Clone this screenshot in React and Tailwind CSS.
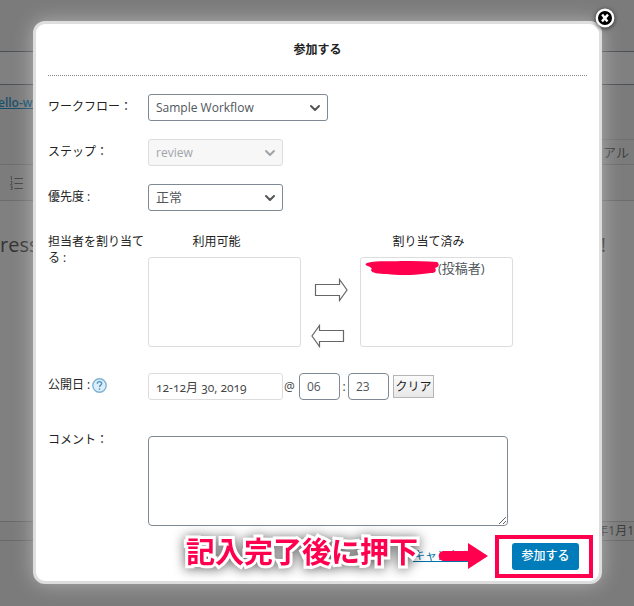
import React from 'react';
import { ChevronDown } from 'lucide-react';

function Label({ htmlFor, children }) {
  return (
    <label htmlFor={htmlFor} className="w-25 shrink-0 pr-1 pt-[5px] text-xs leading-4 text-[#222]">
      {children}
    </label>
  );
}

function Select({ id, className, disabled, children }) {
  return (
    <div className={`relative ${className}`}>
      <select
        id={id}
        disabled={disabled}
        className="block h-[27px] w-full appearance-none rounded-[3px] border border-[#7e8993] bg-white pl-[7px] pr-6 text-[#50565c] disabled:border-[#ddd] disabled:bg-[#f7f7f7] disabled:text-[#a0a5aa] disabled:opacity-100"
      >
        {children}
      </select>
      <ChevronDown
        className={`pointer-events-none absolute right-[5px] top-[6px] h-4 w-4 ${disabled ? 'text-[#a0a5aa]' : 'text-[#555]'}`}
        strokeWidth={3}
      />
    </div>
  );
}

function ArrowButton({ label, flip }) {
  return (
    <button type="button" aria-label={label} className="block">
      <svg width="34" height="24" viewBox="0 0 34 24" className={flip ? 'rotate-180' : ''}>
        <path d="M1.5 6.5H25.5V1.5L33 12L25.5 22.5V17.5H1.5Z" fill="#fff" stroke="#666" strokeWidth="1.2" />
      </svg>
    </button>
  );
}

function EditorBackdrop() {
  return (
    <div className="flex min-h-screen flex-col bg-[#7b7b7b] text-[#3c3c3c]">
      <div className="mt-[51px] h-[34px] border-y border-[#4b5055] bg-[#808080]" />
      <div className="flex h-[79px] justify-between">
        <a href="#permalink" className="-ml-[2px] mt-2 text-xs font-semibold leading-5 text-[#174f6b] underline">
          ello-world
        </a>
        <div className="mt-[54px] w-20 border-t border-[#717171] pr-[5px] pt-[3px] text-right text-[13px] text-[#3f3f3f]">
          ュアル
        </div>
      </div>
      <div className="flex h-[37px] items-center border-y border-[#6c6c6c] bg-[#7c7c7c] pl-[10px]">
        <svg width="13" height="14" viewBox="0 0 13 14" fill="none" stroke="#444">
          <path d="M4.5 2.5H13M4.5 7.5H13M4.5 12.5H13" />
          <path d="M0.5 1L1.5 0.5V4M0.5 5.5H2V7L0.5 8.5H2.5M0.5 10H2V11.5H1M2 11.5V13.5H0.5" strokeWidth="0.8" />
        </svg>
      </div>
      <div className="flex h-80 justify-between bg-[#808080] pt-[30px] text-xl text-[#333]">
        <span>ress</span>
        <span className="pr-7">!</span>
      </div>
      <div className="flex h-5 items-center justify-end border-y border-[#696969] text-xs">2020年1月1</div>
    </div>
  );
}

export default function App() {
  return (
    <div className="relative min-h-screen overflow-hidden font-['Open_Sans','Noto_Sans_CJK_JP',sans-serif]">
      <EditorBackdrop />

      <div className="absolute inset-0 pl-[33px] pr-8 pt-[21px]">
        <div
          role="dialog"
          aria-labelledby="dialog-title"
          className="relative rounded-xl border-3 border-[#dedede] bg-white px-3 pb-[3px] shadow-[0_0_20px_rgba(255,255,255,0.4)]"
        >
          <button type="button" aria-label="閉じる" className="absolute -right-[18px] -top-[18px] block">
            <svg width="24" height="24" viewBox="0 0 24 24" className="drop-shadow-[0_1px_2px_rgba(0,0,0,0.7)]">
              <circle cx="12" cy="12" r="8.2" fill="#000" stroke="#fff" strokeWidth="2.4" />
              <path d="M9.2 8.6L14.4 15.4M15 8.6L9 15.4" stroke="#fff" strokeWidth="2.4" />
            </svg>
          </button>

          <form>
            <h2
              id="dialog-title"
              className="flex h-[52px] items-center justify-center border-b border-dotted border-[#888] text-xs font-bold text-[#222]"
            >
              参加する
            </h2>

            <div className="flex flex-col gap-[18px] pt-[18px]">
              <div className="flex">
                <Label htmlFor="workflow">ワークフロー：</Label>
                <Select id="workflow" className="w-45 text-xs">
                  <option>Sample Workflow</option>
                </Select>
              </div>
              <div className="flex">
                <Label htmlFor="step">ステップ：</Label>
                <Select id="step" className="w-[135px] text-xs" disabled>
                  <option>review</option>
                </Select>
              </div>
              <div className="flex">
                <Label htmlFor="priority">優先度 :</Label>
                <Select id="priority" className="w-[135px] text-[13px]">
                  <option>正常</option>
                </Select>
              </div>
            </div>

            <div className="mt-[18px] flex">
              <Label htmlFor="available">担当者を割り当てる :</Label>
              <div className="flex w-[153px] flex-col pt-[5px]">
                <label htmlFor="available" className="mb-[7px] pr-4 text-center text-xs leading-4 text-[#222]">
                  利用可能
                </label>
                <select
                  id="available"
                  multiple
                  className="block h-[90px] w-full rounded-[3px] border border-[#ddd] bg-white"
                />
              </div>
              <div className="flex w-[59px] flex-col gap-[22px] pl-[13px] pt-[49px]">
                <ArrowButton label="割り当てる" />
                <div className="-ml-[3px]">
                  <ArrowButton label="割り当てを解除" flip />
                </div>
              </div>
              <div className="relative flex w-[153px] flex-col pt-[5px]">
                <label htmlFor="assigned" className="mb-[7px] pr-4 text-center text-xs leading-4 text-[#222]">
                  割り当て済み
                </label>
                <select
                  id="assigned"
                  multiple
                  className="block h-[90px] w-full overflow-hidden rounded-[3px] border border-[#ddd] bg-white text-[13px] text-[#50565c]"
                >
                  <option className="min-h-0 p-0 pl-[77px] leading-4">(投稿者)</option>
                </select>
                <svg className="absolute left-[5px] top-[31px]" width="75" height="16" viewBox="0 0 75 16">
                  <path
                    d="M2 3C14 0 24 2 36 1C50 1 62 1 72 2C75 4 74 7 70 8C72 11 70 13 66 13C52 15 36 16 22 14C14 14 6 13 6 10C8 8 5 7 3 6C0 5 0 4 2 3Z"
                    fill="#ff004f"
                  />
                </svg>
              </div>
            </div>

            <div className="mt-[25px] flex">
              <div className="flex w-25 shrink-0 items-start">
                <label htmlFor="publish-date" className="pt-1 text-xs leading-4 text-[#222]">
                  公開日 :
                </label>
                <svg className="ml-[2px] mt-[5px]" width="15" height="15" viewBox="0 0 15 15">
                  <circle cx="7.5" cy="7.5" r="6.7" fill="#dceefa" stroke="#7fb3d3" strokeWidth="1.4" />
                  <path
                    d="M5.3 5.8C5.3 3 9.7 3 9.7 5.6C9.7 7.2 7.5 7 7.5 9M7.5 10.2V11.7"
                    fill="none"
                    stroke="#4d93bd"
                    strokeWidth="1.4"
                  />
                </svg>
              </div>
              <input
                id="publish-date"
                type="text"
                defaultValue="12-12月 30, 2019"
                className="h-[27px] w-[135px] rounded-[3px] border border-[#ddd] bg-white px-[7px] text-xs oldstyle-nums text-[#444]"
              />
              <span className="w-4 pl-px pt-1 text-xs leading-5 text-[#444]">@</span>
              <input
                type="text"
                aria-label="時"
                defaultValue="06"
                className="h-[27px] w-[41px] rounded border border-[#7e8993] bg-white px-[7px] text-xs text-[#50565c]"
              />
              <span className="w-2 pt-1 text-center text-xs leading-5 text-[#444]">:</span>
              <input
                type="text"
                aria-label="分"
                defaultValue="23"
                className="h-[27px] w-[41px] rounded border border-[#7e8993] bg-white px-[7px] text-xs text-[#50565c]"
              />
              <button
                type="button"
                className="ml-1 mt-[2px] h-[23px] w-[41px] border border-[#b5b5b5] bg-linear-to-b from-[#fafafa] to-[#e8e8e8] text-xs text-[#222]"
              >
                クリア
              </button>
            </div>

            <div className="mt-[27px] flex">
              <Label htmlFor="comment">コメント：</Label>
              <textarea
                id="comment"
                className="mt-[9px] block h-[90px] w-90 rounded border border-[#7e8993] bg-white p-2 text-[13px]"
              />
            </div>

            <div className="relative mt-2 flex h-11 items-center justify-end">
              <a href="#cancel" className="mr-[22px] text-xs text-[#0073aa] underline">
                キャンセル
              </a>
              <div className="-mr-[6px] border-4 border-[#ff004f] py-1 pl-[13px] pr-[10px]">
                <button
                  type="submit"
                  className="block h-[27px] w-[67px] rounded-[3px] bg-[#007cba] text-xs font-medium text-white"
                >
                  参加する
                </button>
              </div>
              <svg className="absolute right-[99px] top-[9px]" width="50" height="26" viewBox="0 0 50 26">
                <path d="M6 8H30V0L50 13L30 26V18H6C-1 18-1 8 6 8Z" fill="#ff004f" />
              </svg>
              <p className="absolute right-[169px] top-0 whitespace-nowrap text-[29px] font-bold leading-9 text-[#ff004f] [paint-order:stroke_fill] [-webkit-text-stroke:6px_white] drop-shadow-[0_1px_6px_rgba(0,0,0,0.6)]">
                記入完了後に押下
              </p>
            </div>
          </form>
        </div>
      </div>
    </div>
  );
}
